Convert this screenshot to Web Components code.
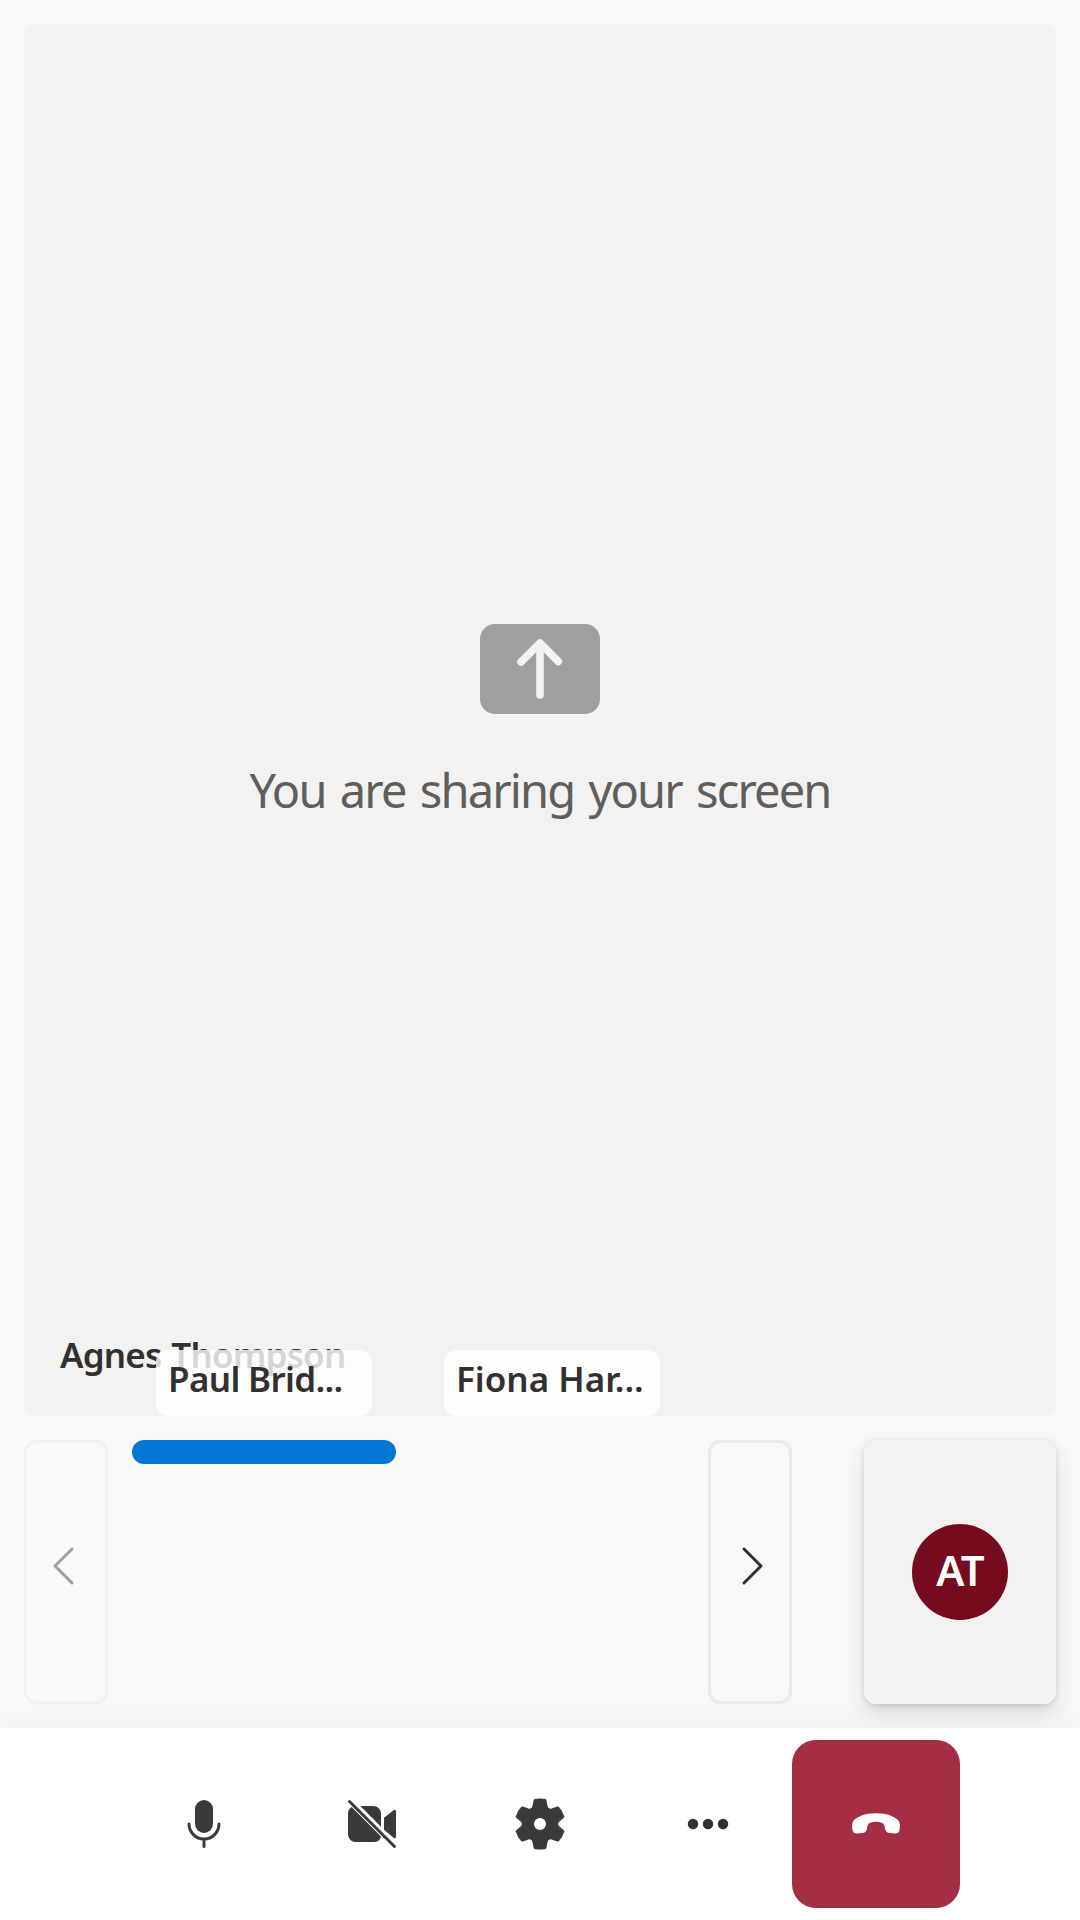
<!DOCTYPE html>
<html lang="en"><head><meta charset="utf-8"><title>Call</title>
<style>html,body{margin:0;background:#faf9f8}body{font-family:"Noto Sans","Open Sans",sans-serif;color:#323130}</style></head>
<body><call-screen></call-screen>
<script>
const def=(name,html)=>customElements.define(name,class extends HTMLElement{
  constructor(){super();this.attachShadow({mode:'open'}).innerHTML=html;}
});
def('share-stage',`<style>
:host{display:flex;flex-direction:column;align-items:center;height:1392px;box-sizing:border-box;padding-top:600px;background:#f3f2f1;border-radius:12px;position:relative}
svg{display:block;width:120px;height:90px}
p{margin:43px 0 0;font-size:47px;letter-spacing:-1.85px;word-spacing:3.8px;line-height:66px;color:#605e5c;white-space:nowrap}
.name{position:absolute;left:36px;bottom:25px;line-height:72px;font-size:35px;letter-spacing:-.8px;word-spacing:1.500px;font-weight:600;white-space:nowrap}
</style><svg viewBox="0 0 120 90"><rect width="120" height="90" rx="15" fill="#a19f9d"/><path d="M60 71V19.500M41 38 60 19 78.300 37.500" fill="none" stroke="#f3f2f1" stroke-width="7.6" stroke-linecap="round" stroke-linejoin="round"/></svg>
<p><slot></slot></p><div class="name"><slot name="owner"></slot></div>`);
def('page-button',`<style>
:host{display:flex;align-items:center;justify-content:center;box-sizing:border-box;width:84px;height:264px;border:3px solid #edebe9;border-radius:12px;color:#323130}
:host([disabled]){border-color:#f3f2f1;color:#a19f9d}
svg{width:60px;height:60px;margin:-12px 0 0 6px}
:host([disabled]) svg{transform:scaleX(-1);margin-left:-6px}
</style><svg viewBox="0 0 60 60"><path d="M21 13 38 30 21 47" fill="none" stroke="currentColor" stroke-width="3" stroke-linecap="round" stroke-linejoin="round"/></svg>`);
def('video-tile',`<style>
:host{display:block;position:relative;width:264px;height:24px;border-radius:12px}
:host([speaking]){background:#0078d4}
.tag{position:absolute;left:24px;bottom:48px;width:216px;height:66px;box-sizing:border-box;padding:0 12px;border-radius:12px;background:rgba(255,255,255,.8);font-size:35px;letter-spacing:var(--track,-.65px);line-height:58px;font-weight:600;white-space:nowrap}
</style><div class="tag"><slot></slot></div>`);
def('local-tile',`<style>
:host{display:flex;align-items:center;justify-content:center;width:192px;height:264px;border-radius:12px;background:#f3f2f1;box-shadow:0 9.6px 21.6px rgba(0,0,0,.132),0 1.8px 5.4px rgba(0,0,0,.108)}
.face{width:96px;height:96px;border-radius:50%;background:#750b1c;color:#fff;display:flex;align-items:center;justify-content:center;font-size:42px;letter-spacing:-.8px;font-weight:560;line-height:92px;height:96px;align-items:flex-start}
</style><div class="face"><slot></slot></div>`);
const icons={
mic:'<rect x="7" y="2" width="6" height="11" rx="3"/><path d="M5 10a5 5 0 0 0 10 0M10 15v2.5" fill="none" stroke="currentColor" stroke-linecap="round"/>',
video:'<path fill-rule="evenodd" d="M3.2 4.35 13 14.15A2.5 2.5 0 0 1 10.5 16h-6A2.5 2.5 0 0 1 2 13.5v-7C2 5.600 2.450 4.800 3.200 4.350ZM6.120 4H10.500A2.500 2.500 0 0 1 13 6.500V10.880ZM14 7.930 17.180 5.420Q18 4.900 18 5.900V14.100Q18 15.100 17.180 14.580L14 11.880Z"/><path d="M2.500 2.500 17.500 17.500" fill="none" stroke="currentColor" stroke-linecap="round"/>',
settings:'<path d="M1.91 7.38A8.5 8.5 0 0 1 3.7 4.3a.5.5 0 0 1 .54-.13l1.92.68a1 1 0 0 0 1.32-.76l.36-2a.5.5 0 0 1 .4-.4 8.53 8.53 0 0 1 3.55 0c.2.04.35.2.38.4l.37 2a1 1 0 0 0 1.32.76l1.92-.68a.5.5 0 0 1 .54.13 8.5 8.5 0 0 1 1.78 3.08c.06.2 0 .4-.15.54l-1.56 1.32a1 1 0 0 0 0 1.52l1.56 1.32a.5.5 0 0 1 .15.54 8.5 8.5 0 0 1-1.78 3.08.5.5 0 0 1-.54.13l-1.92-.68a1 1 0 0 0-1.32.76l-.37 2a.5.5 0 0 1-.38.4 8.53 8.53 0 0 1-3.56 0 .5.5 0 0 1-.39-.4l-.36-2a1 1 0 0 0-1.32-.76l-1.92.68a.5.5 0 0 1-.54-.13 8.5 8.5 0 0 1-1.78-3.08.5.5 0 0 1 .15-.54l1.56-1.32a1 1 0 0 0 0-1.52L2.06 7.92a.5.5 0 0 1-.15-.54ZM8 10a2 2 0 1 0 4 0 2 2 0 0 0-4 0Z"/>',
more:'<g fill="#323130"><circle cx="5" cy="10" r="1.75"/><circle cx="10" cy="10" r="1.75"/><circle cx="15" cy="10" r="1.75"/></g>',
end:'<path d="M10 6.400C13.800 6.400 16.500 7.600 17.500 8.900C18.100 9.700 18 10.900 17.850 12C17.700 12.850 17.100 13.200 16.300 13.150L14.500 13C13.700 12.900 13.300 12.500 13.100 11.800L12.750 10.350C12.400 9.600 11.300 9.250 10 9.250S7.600 9.600 7.250 10.350L6.900 11.800C6.700 12.500 6.300 12.900 5.500 13L3.700 13.150C2.900 13.200 2.300 12.850 2.150 12C2 10.900 1.900 9.700 2.500 8.900C3.500 7.600 6.200 6.400 10 6.400Z"/>'};
customElements.define('call-button',class extends HTMLElement{
 constructor(){super();this.attachShadow({mode:'open'});}
 connectedCallback(){this.shadowRoot.innerHTML=`<style>
:host{display:flex;align-items:center;justify-content:center;width:168px;height:168px;border-radius:24px;color:#3b3a39}
:host([icon=end]){background:#a42e43;color:#fff}
svg{width:60px;height:60px}</style><svg viewBox="0 0 20 20" fill="currentColor">${icons[this.getAttribute('icon')]}</svg>`;}
});
def('control-bar',`<style>:host{display:flex;align-items:center;justify-content:center;height:192px;background:#fff;box-shadow:0 19.2px 43.200px rgba(0,0,0,.132);position:relative}</style><slot></slot>`);
def('call-screen',`<style>
:host{display:flex;flex-direction:column;width:1080px;height:1920px;overflow:hidden}
.main{display:flex;flex-direction:column;gap:24px;padding:24px;height:1728px;box-sizing:border-box}
.row,.gallery{display:flex;gap:24px}.gallery{width:552px;align-items:flex-start}
local-tile{margin-left:48px}
</style><div class="main"><share-stage>You are sharing your screen<span slot="owner">Agnes Thompson</span></share-stage>
<div class="row"><page-button disabled></page-button><div class="gallery"><video-tile speaking>Paul Brid...</video-tile><video-tile style="--track:0px">Fiona Har...</video-tile></div><page-button></page-button><local-tile>AT</local-tile></div></div>
<control-bar><call-button icon="mic"></call-button><call-button icon="video"></call-button><call-button icon="settings"></call-button><call-button icon="more"></call-button><call-button icon="end"></call-button></control-bar>`);
</script></body></html>
